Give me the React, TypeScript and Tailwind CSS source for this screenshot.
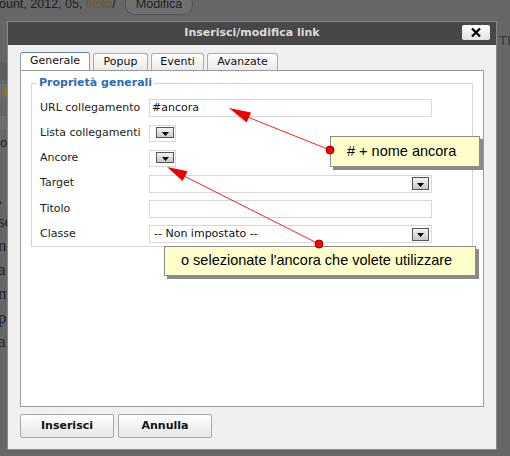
import React from "react";

const V = { fontFamily: '"DejaVu Sans", Verdana, sans-serif' };
const A = { fontFamily: '"Liberation Sans", Arial, sans-serif' };

function Arrow() {
  return <svg width="7" height="4" viewBox="0 0 7 4"><path d="M0 0h7L3.5 4z" fill="#000" /></svg>;
}

function DropBtn() {
  return (
    <div className="w-[18px] h-[11px] border border-[#555] bg-gradient-to-b from-[#f4f4f4] to-[#c8c8c8] flex items-end justify-center pb-[1px]">
      <Arrow />
    </div>
  );
}

function SelBtn() {
  return (
    <div className="w-[17px] h-[13px] border border-[#555] bg-gradient-to-b from-[#f4f4f4] to-[#c8c8c8] flex items-center justify-center pt-[2px]">
      <Arrow />
    </div>
  );
}

function Row({ label, children }: { label: string; children: React.ReactNode }) {
  return (
    <div className="flex items-center h-[25.2px]">
      <div className="w-[117px] pl-[8px] text-[11px] text-[#222]" style={V}>{label}</div>
      {children}
    </div>
  );
}

export default function App() {
  return (
    <div className="relative w-[510px] h-[456px] bg-[#666] overflow-hidden" style={V}>
      {/* background page */}
      <div className="absolute top-[-7px] left-[-1px] flex items-center gap-[9px] text-[12.5px] text-[#1e1e1e]" style={A}>
        <span>ount, 2012, 05, <span className="text-[#6b5a1c]">titolo</span>/</span>
        <span className="h-[22px] px-[10px] rounded-[10px] border border-[#555] bg-[#707070] flex items-center">Modifica</span>
      </div>
      <div className="absolute top-[31px] left-[499px] text-[13px] text-[#333]" style={A}>TI</div>
      <div className="absolute left-0 top-[62px] w-[8px] flex flex-col gap-[4px]">
        <div className="h-[18px] bg-[#5e5e5e]" />
        <div className="h-[14px] bg-[#6c6c6c] flex items-center"><div className="w-[4px] h-[8px] bg-[#8a7430] ml-[4px]" /></div>
        <div className="h-[10px]" />
        <div className="h-[14px] bg-[#6e6e6e]" />
        <div className="h-[14px] text-[12px] text-[#222] overflow-hidden">oc</div>
      </div>
      <div className="absolute left-[-2px] top-[186px] w-[10px] overflow-hidden flex flex-col text-[17px] leading-[24px] text-[#222]" style={{ fontFamily: '"Liberation Serif", serif' }}>
        <span>,</span><span>sc</span><span>ne</span><span>a</span><span>m</span><span>p</span><span>ai</span>
      </div>

      {/* dialog */}
      <div className="absolute left-[7px] top-[21px] w-[490px] h-[429px] border border-[#8a8a8a] bg-[#f0f0f0] flex flex-col">
        <div className="h-[23px] bg-[#474747] relative flex items-center justify-center">
          <span className="text-[11px] font-bold text-[#dcdcdc]">Inserisci/modifica link</span>
          <div className="absolute right-[6px] top-[3px] w-[28px] h-[15px] bg-gradient-to-b from-white to-[#e2e2e2] rounded-[2px] flex items-center justify-center">
            <svg width="10" height="9" viewBox="0 0 10 9"><path d="M1 0.5l8 8M9 0.5l-8 8" stroke="#000" strokeWidth="2.2" /></svg>
          </div>
        </div>
        <div className="pl-[12px] pr-[12px] pt-[8px] flex flex-col">
          <div className="flex gap-[3px] items-end h-[17px]">
            <div className="relative z-10 h-[18px] w-[70px] bg-white border border-[#8a9aa8] border-t-[#6d8196] border-b-0 rounded-t-[3px] text-[11px] text-[#111] flex items-center justify-center">Generale</div>
            <div className="h-[17px] w-[55px] bg-gradient-to-b from-white to-[#eaeaea] border border-[#aab] border-b-0 rounded-t-[3px] text-[11px] text-[#111] flex items-center justify-center">Popup</div>
            <div className="h-[17px] w-[53px] bg-gradient-to-b from-white to-[#eaeaea] border border-[#aab] border-b-0 rounded-t-[3px] text-[11px] text-[#111] flex items-center justify-center">Eventi</div>
            <div className="h-[17px] w-[71px] bg-gradient-to-b from-white to-[#eaeaea] border border-[#aab] border-b-0 rounded-t-[3px] text-[11px] text-[#111] flex items-center justify-center">Avanzate</div>
          </div>
          <div className="h-[337px] bg-white border border-[#9a9a9a] pt-[4px] px-[10px]">
            <fieldset className="border border-[#d4d4d4] px-[0px] pb-[7px] pt-[4px] h-[172px]">
              <legend className="ml-[5px] px-[2px] text-[11px] font-bold text-[#2a6cba]">Proprietà generali</legend>
              <Row label="URL collegamento">
                <div className="w-[283px] h-[18px] border border-[#d8d8d8] text-[11px] text-[#111] flex items-center pl-[2px]">#ancora</div>
              </Row>
              <Row label="Lista collegamenti">
                <div className="w-[27px] h-[17px] border border-[#d8d8d8] flex items-start justify-end pt-[1px] pr-[1px]"><DropBtn /></div>
              </Row>
              <Row label="Ancore">
                <div className="w-[27px] h-[17px] border border-[#d8d8d8] flex items-start justify-end pt-[1px] pr-[1px]"><DropBtn /></div>
              </Row>
              <Row label="Target">
                <div className="w-[283px] h-[18px] border border-[#d8d8d8] flex items-center justify-end pr-[2px]"><SelBtn /></div>
              </Row>
              <Row label="Titolo">
                <div className="w-[283px] h-[18px] border border-[#d8d8d8]" />
              </Row>
              <Row label="Classe">
                <div className="w-[283px] h-[18px] border border-[#d8d8d8] flex items-center justify-between pl-[4px] pr-[2px] text-[11px] text-[#111]">
                  <span>-- Non impostato --</span>
                  <SelBtn />
                </div>
              </Row>
            </fieldset>
          </div>
          <div className="flex gap-[4px] mt-[7px]">
            <button className="w-[94px] h-[24px] rounded-[2px] border border-[#a8a8a8] bg-gradient-to-b from-white to-[#e6e6e6] text-[11px] font-bold text-[#111]" style={V}>Inserisci</button>
            <button className="w-[94px] h-[24px] rounded-[2px] border border-[#a8a8a8] bg-gradient-to-b from-white to-[#e6e6e6] text-[11px] font-bold text-[#111]" style={V}>Annulla</button>
          </div>
        </div>
      </div>

      {/* annotation lines */}
      <svg className="absolute left-0 top-0" width="510" height="456" viewBox="0 0 510 456">
        <line x1="330" y1="150" x2="240" y2="114" stroke="#ff2020" strokeWidth="1" />
        <path d="M229 108 L246.7 122.5 L251 112.5 Z" fill="#ee0000" />
        <line x1="319" y1="244" x2="180" y2="174" stroke="#ff2020" strokeWidth="1" />
        <path d="M167 167 L182.6 181 L187.6 171.2 Z" fill="#ee0000" />
      </svg>

      {/* callouts */}
      <div className="absolute left-[330px] top-[136px] w-[150px] h-[31px] bg-[#ffffcc] border border-[#8c8c8c] shadow-[3px_3px_0_#8a8a8a] flex items-center pl-[16px] text-[14.5px] text-black" style={A}># + nome ancora</div>
      <div className="absolute left-[164px] top-[246px] w-[312px] h-[30px] bg-[#ffffcc] border border-[#8c8c8c] shadow-[3px_3px_0_#8a8a8a] flex items-center pl-[16px] text-[14.5px] text-black" style={A}>o selezionate l'ancora che volete utilizzare</div>

      <svg className="absolute left-0 top-0 pointer-events-none" width="510" height="456" viewBox="0 0 510 456">
        <circle cx="330" cy="150" r="4" fill="#ff0000" stroke="#a00000" strokeWidth="1" />
        <circle cx="319" cy="244" r="4" fill="#ff0000" stroke="#a00000" strokeWidth="1" />
      </svg>
    </div>
  );
}
